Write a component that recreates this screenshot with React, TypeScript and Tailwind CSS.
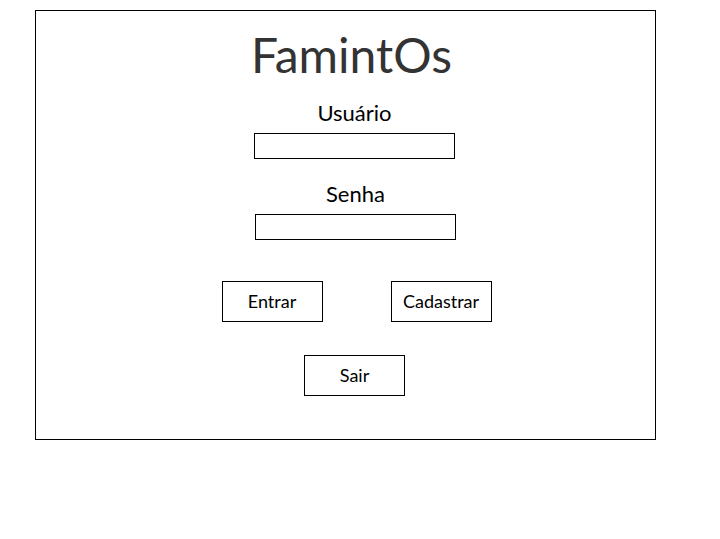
const font = { fontFamily: "Lato, 'Open Sans', sans-serif" };

function Field({ label }: { label: string }) {
  return (
    <div className="flex flex-col items-center">
      <span className="text-[22px] leading-[28px] text-black">{label}</span>
      <div className="mt-[6px] h-[26px] w-[201px] border border-black bg-white" />
    </div>
  );
}

function Btn({ children }: { children: React.ReactNode }) {
  return (
    <button className="flex h-[41px] w-[101px] items-center justify-center border border-black bg-white text-[18px] text-black">
      {children}
    </button>
  );
}

export default function App() {
  return (
    <div className="h-[539px] w-[720px] bg-white pl-[35px] pt-[10px]" style={font}>
      <div className="flex h-[430px] w-[621px] flex-col items-center border border-black pl-[18px]">
        <h1 className="mr-[6px] mt-[16px] text-[48px] leading-[56px] text-[#333333]">FamintOs</h1>
        <div className="mt-[16px]">
          <Field label="Usuário" />
        </div>
        <div className="ml-[2px] mt-[21px]">
          <Field label="Senha" />
        </div>
        <div className="ml-[4px] mt-[41px] flex gap-[68px]">
          <Btn>Entrar</Btn>
          <Btn>Cadastrar</Btn>
        </div>
        <div className="mt-[33px]">
          <Btn>Sair</Btn>
        </div>
      </div>
    </div>
  );
}
